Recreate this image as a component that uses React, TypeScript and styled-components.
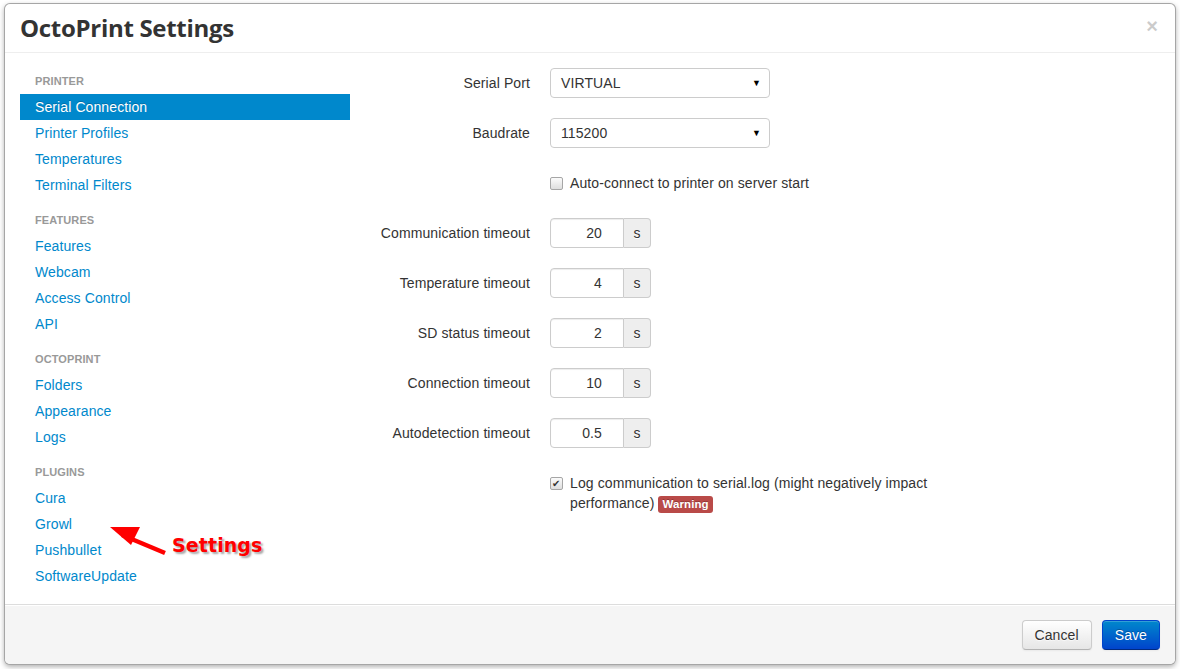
import * as React from "react";
import styled, { createGlobalStyle } from "styled-components";

const GlobalStyle = createGlobalStyle`
  html, body {
    margin: 0;
    padding: 0;
    background: #ffffff;
    font-family: "Liberation Sans", Arial, sans-serif;
    font-size: 14px;
    line-height: 20px;
    letter-spacing: 0.1px;
    color: #333333;
  }
`;

type NavSection = { title: string; items: string[] };

const sections: NavSection[] = [
  { title: "Printer", items: ["Serial Connection", "Printer Profiles", "Temperatures", "Terminal Filters"] },
  { title: "Features", items: ["Features", "Webcam", "Access Control", "API"] },
  { title: "OctoPrint", items: ["Folders", "Appearance", "Logs"] },
  { title: "Plugins", items: ["Cura", "Growl", "Pushbullet", "SoftwareUpdate"] },
];

const timeouts = [
  { label: "Communication timeout", value: "20" },
  { label: "Temperature timeout", value: "4" },
  { label: "SD status timeout", value: "2" },
  { label: "Connection timeout", value: "10" },
  { label: "Autodetection timeout", value: "0.5" },
];

export default function App() {
  return (
    <Page>
      <GlobalStyle />
      <Modal>
        <Header>
          <Title>OctoPrint Settings</Title>
          <Close>×</Close>
        </Header>
        <Body>
          <Sidebar>
            {sections.map((s, si) => (
              <React.Fragment key={s.title}>
                <NavHeader $first={si === 0}>{s.title}</NavHeader>
                {s.items.map((item) => (
                  <NavItem key={item} $active={item === "Serial Connection"}>
                    {item}
                  </NavItem>
                ))}
              </React.Fragment>
            ))}
          </Sidebar>
          <Form>
            <Group>
              <Label>Serial Port</Label>
              <Controls>
                <Select>
                  <span>VIRTUAL</span>
                  <Caret>▼</Caret>
                </Select>
              </Controls>
            </Group>
            <Group>
              <Label>Baudrate</Label>
              <Controls>
                <Select>
                  <span>115200</span>
                  <Caret>▼</Caret>
                </Select>
              </Controls>
            </Group>
            <Group>
              <Label />
              <Controls>
                <CheckRow>
                  <Box />
                  <span>Auto-connect to printer on server start</span>
                </CheckRow>
              </Controls>
            </Group>
            {timeouts.map((t) => (
              <Group key={t.label}>
                <Label>{t.label}</Label>
                <Controls>
                  <Append>
                    <NumInput>{t.value}</NumInput>
                    <AddOn>s</AddOn>
                  </Append>
                </Controls>
              </Group>
            ))}
            <Group>
              <Label />
              <Controls>
                <CheckRow>
                  <Box $checked>✔</Box>
                  <CheckText>
                    Log communication to serial.log (might negatively impact performance){" "}
                    <Badge>Warning</Badge>
                  </CheckText>
                </CheckRow>
              </Controls>
            </Group>
          </Form>
        </Body>
        <Footer>
          <Button>Cancel</Button>
          <Button $primary>Save</Button>
        </Footer>
      </Modal>

      <Arrow width="60" height="30" viewBox="0 0 60 30">
        <path d="M12 9 L55 27" stroke="#ff0000" strokeWidth="4.5" fill="none" />
        <polygon points="0,1 30,1 21,19" fill="#ff0000" />
      </Arrow>
      <Annotation>Settings</Annotation>
    </Page>
  );
}

// ----------------------------------------------------------------------------

const Page = styled.div`
  position: relative;
  width: 1180px;
  height: 669px;
  padding: 3px 4px 4px;
  box-sizing: border-box;
  overflow: hidden;
`;

const Modal = styled.div`
  height: 662px;
  display: flex;
  flex-direction: column;
  background: #fff;
  border: 1px solid rgba(0, 0, 0, 0.35);
  border-radius: 6px;
  box-shadow: 0 2px 5px rgba(0, 0, 0, 0.3);
  box-sizing: border-box;
  overflow: hidden;
`;

const Header = styled.div`
  display: flex;
  align-items: center;
  justify-content: space-between;
  padding: 9px 15px;
  height: 30px;
  border-bottom: 1px solid #eeeeee;
`;

const Title = styled.h3`
  margin: 0;
  font-family: "Open Sans", "Liberation Sans", sans-serif;
  font-weight: 700;
  font-size: 24px;
  line-height: 30px;
  color: #333;
  letter-spacing: -0.3px;
`;

const Close = styled.span`
  font-size: 20px;
  font-weight: bold;
  color: #000;
  opacity: 0.2;
  margin-right: 2px;
  margin-top: -5px;
`;

const Body = styled.div`
  flex: 1;
  display: flex;
  padding: 15px;
  gap: 20px;
`;

const Sidebar = styled.div`
  width: 330px;
  display: flex;
  flex-direction: column;
`;

const NavHeader = styled.div<{ $first?: boolean }>`
  padding: 3px 15px;
  margin-top: ${(p) => (p.$first ? "0" : "9px")};
  font-size: 11px;
  font-weight: bold;
  line-height: 20px;
  color: #999999;
  text-transform: uppercase;
  text-shadow: 0 1px 0 rgba(255, 255, 255, 0.5);
`;

const NavItem = styled.div<{ $active?: boolean }>`
  padding: 3px 15px;
  line-height: 20px;
  color: ${(p) => (p.$active ? "#fff" : "#0088cc")};
  background: ${(p) => (p.$active ? "#0088cc" : "transparent")};
  text-shadow: ${(p) => (p.$active ? "0 -1px 0 rgba(0,0,0,0.2)" : "none")};
`;

const Form = styled.div`
  width: 580px;
  display: flex;
  flex-direction: column;
  gap: 20px;
`;

const Group = styled.div`
  display: flex;
  gap: 20px;
`;

const Label = styled.div`
  width: 160px;
  padding-top: 5px;
  text-align: right;
  flex-shrink: 0;
`;

const Controls = styled.div`
  flex: 1;
`;

const Select = styled.div`
  width: 220px;
  height: 30px;
  box-sizing: border-box;
  border: 1px solid #cccccc;
  border-radius: 4px;
  padding: 4px 8px 4px 10px;
  display: flex;
  align-items: center;
  justify-content: space-between;
  background: #fff;
`;

const Caret = styled.span`
  font-size: 9px;
  color: #000;
`;

const CheckRow = styled.div`
  display: flex;
  align-items: flex-start;
  gap: 7px;
  padding-top: 5px;
  min-height: 30px;
  box-sizing: border-box;
  max-width: 385px;
`;

const CheckText = styled.span`
  line-height: 20px;
`;

const Box = styled.span<{ $checked?: boolean }>`
  flex-shrink: 0;
  width: 11px;
  height: 11px;
  margin-top: 4px;
  border: 1px solid #a6a6a6;
  border-radius: 2px;
  background: linear-gradient(#fbfbfb, #dedede);
  color: #333;
  font-size: 10px;
  line-height: 11px;
  text-align: center;
`;

const Badge = styled.span`
  display: inline-block;
  padding: 1px 4px 2px;
  font-size: 11.5px;
  font-weight: bold;
  line-height: 14px;
  color: #fff;
  background: #b94a48;
  border-radius: 3px;
  text-shadow: 0 -1px 0 rgba(0, 0, 0, 0.25);
  vertical-align: baseline;
`;

const Append = styled.div`
  display: flex;
  height: 30px;
`;

const NumInput = styled.div`
  width: 74px;
  box-sizing: border-box;
  border: 1px solid #cccccc;
  border-radius: 4px 0 0 4px;
  padding: 4px 21px 4px 6px;
  text-align: right;
  background: #fff;
  box-shadow: inset 0 1px 1px rgba(0, 0, 0, 0.075);
`;

const AddOn = styled.div`
  width: 27px;
  box-sizing: border-box;
  border: 1px solid #cccccc;
  border-left: none;
  border-radius: 0 4px 4px 0;
  background: #eeeeee;
  text-align: center;
  padding-top: 4px;
  text-shadow: 0 1px 0 #fff;
`;

const Footer = styled.div`
  display: flex;
  justify-content: flex-end;
  gap: 10px;
  padding: 15px 15px 15px;
  background: #f5f5f5;
  border-top: 1px solid #dddddd;
  box-shadow: inset 0 1px 0 #fff;
`;

const Button = styled.div<{ $primary?: boolean }>`
  height: 30px;
  box-sizing: border-box;
  padding: 4px 12px;
  border-radius: 4px;
  border: 1px solid ${(p) => (p.$primary ? "#0044cc" : "#cccccc")};
  border-bottom-color: ${(p) => (p.$primary ? "#002a80" : "#b3b3b3")};
  color: ${(p) => (p.$primary ? "#fff" : "#333")};
  background: ${(p) =>
    p.$primary ? "linear-gradient(#0088cc, #0044cc)" : "linear-gradient(#ffffff, #e6e6e6)"};
  text-shadow: ${(p) =>
    p.$primary ? "0 -1px 0 rgba(0,0,0,0.25)" : "0 1px 1px rgba(255,255,255,0.75)"};
  box-shadow: inset 0 1px 0 rgba(255, 255, 255, 0.2), 0 1px 2px rgba(0, 0, 0, 0.05);
`;

const Arrow = styled.svg`
  position: absolute;
  left: 110px;
  top: 526px;
`;

const Annotation = styled.div`
  position: absolute;
  left: 172px;
  top: 533px;
  font-family: "DejaVu Sans", Verdana, sans-serif;
  font-weight: bold;
  font-size: 19px;
  line-height: 24px;
  color: #ff0000;
  text-shadow: 2px 2px 2px rgba(0, 0, 0, 0.35);
`;
